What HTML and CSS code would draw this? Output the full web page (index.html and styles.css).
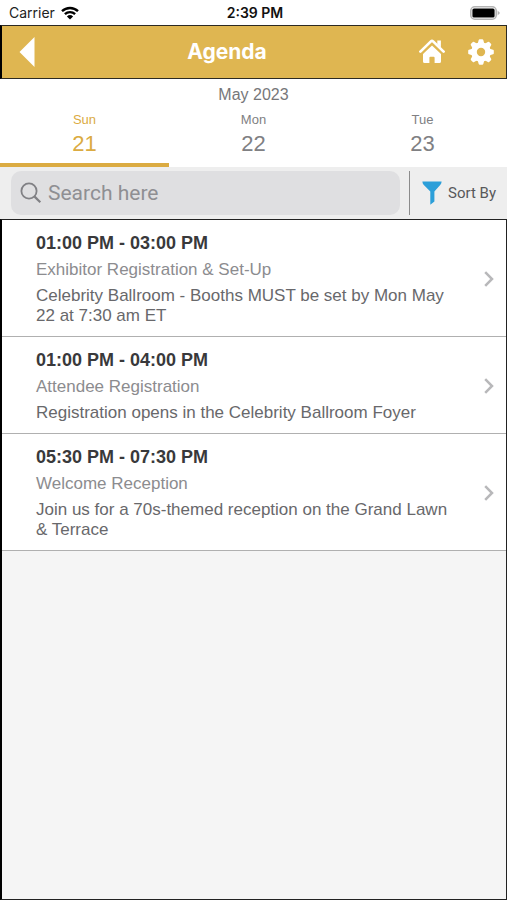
FILE: index.html
```html
<!DOCTYPE html>
<html lang="en">
<head>
<meta charset="utf-8">
<meta name="viewport" content="width=device-width, initial-scale=1">
<title>Agenda</title>
<link rel="stylesheet" href="styles.css">
</head>
<body>
<div class="status">
  <div class="carrier">
    <span>Carrier</span>
    <svg width="20" height="16" viewBox="0 0 20 16" aria-hidden="true">
      <path d="M2 6.2a11.6 11.6 0 0 1 16 0M4.9 9.2a7.4 7.4 0 0 1 10.2 0" fill="none" stroke="#000" stroke-width="2.4"/>
      <path d="M10 14.6 6.9 11.5a4.5 4.5 0 0 1 6.2 0z"/>
    </svg>
  </div>
  <span class="clock">2:39 PM</span>
  <svg class="battery" width="32" height="16" viewBox="0 0 32 16" aria-hidden="true">
    <rect x="1.8" y="1.8" width="25.4" height="12.4" rx="4" fill="#fff" stroke="#b4b4b4" stroke-width="1.6"/>
    <rect x="3.4" y="3.4" width="22.2" height="9.2" rx="1.6"/>
    <path d="M28.6 5.6 31 8l-2.400 2.600z" fill="#b4b4b4"/>
  </svg>
</div>

<header class="bar">
  <button class="icon-button" type="button" aria-label="Back">
    <svg width="16" height="30" viewBox="0 0 16 30"><path d="M15.5 0v30L.5 15z" fill="#fff"/></svg>
  </button>
  <h1 class="title">Agenda</h1>
  <div class="actions">
    <button class="icon-button" type="button" aria-label="Home">
      <svg width="26" height="26" viewBox="0 0 26 26" fill="#fff">
        <path d="M1.4 12.600 11.9 2.400q1.100-1 2.200 0L24.600 12.600" fill="none" stroke="#fff" stroke-width="2.700" stroke-linecap="round" stroke-linejoin="round"/>
        <path d="M18.300 1.400h3.600v7.200l-3.600-3.500z"/>
        <path d="M13 6.400 22 15v7.400q0 1.600-1.600 1.600h-4.800v-5.200q0-1-1-1h-3.200q-1 0-1 1V24H5.600Q4 24 4 22.400V15z"/>
      </svg>
    </button>
    <button class="icon-button" type="button" aria-label="Settings">
      <svg width="26" height="26" viewBox="0 0 26 26">
        <g fill="#fff">
          <path fill-rule="evenodd" d="M13 3.200a9.800 9.800 0 1 0 0 19.600 9.800 9.800 0 0 0 0-19.600zm0 5.600a4.200 4.200 0 1 1 0 8.400 4.200 4.200 0 0 1 0-8.400z"/>
          <path id="tooth" d="M9.600 5 10.700 1q.2-.8 1-.8h2.600q.8 0 1 .8L16.400 5z"/>
          <use href="#tooth" transform="rotate(45 13 13)"/>
          <use href="#tooth" transform="rotate(90 13 13)"/>
          <use href="#tooth" transform="rotate(135 13 13)"/>
          <use href="#tooth" transform="rotate(180 13 13)"/>
          <use href="#tooth" transform="rotate(225 13 13)"/>
          <use href="#tooth" transform="rotate(270 13 13)"/>
          <use href="#tooth" transform="rotate(315 13 13)"/>
        </g>
      </svg>
    </button>
  </div>
</header>

<nav class="dates" aria-label="Dates">
  <div class="month">May 2023</div>
  <div class="days">
    <button class="day day-active" type="button" aria-current="date"><span class="weekday">Sun</span><span class="number">21</span></button>
    <button class="day" type="button"><span class="weekday">Mon</span><span class="number">22</span></button>
    <button class="day" type="button"><span class="weekday">Tue</span><span class="number">23</span></button>
  </div>
</nav>

<div class="tools">
  <label class="search">
    <svg width="22" height="22" viewBox="0 0 22 22" fill="none" stroke="#808084" aria-hidden="true">
      <circle cx="9" cy="9" r="7.600" stroke-width="1.800"/><path d="M14.600 14.600 20.300 20.300" stroke-width="2.200"/>
    </svg>
    <input type="search" placeholder="Search here" aria-label="Search">
  </label>
  <button class="sort" type="button">
    <svg width="20" height="24" viewBox="0 0 20 24" aria-hidden="true"><path d="M.4.500h19.200q0 2-1.200 3.200L12.400 10.600V20.500L8.300 23.800V10.600L1.600 3.700Q.4 2.500.4.500z" fill="#2c9fd9"/></svg>
    <span>Sort By</span>
  </button>
</div>

<main class="content">
  <ul class="list">
    <li><a class="session" href="#">
      <div class="details">
        <h2 class="time">01:00 PM - 03:00 PM</h2>
        <p class="name">Exhibitor Registration &amp; Set-Up</p>
        <p class="text">Celebrity Ballroom - Booths MUST be set by Mon May 22 at 7:30 am ET</p>
      </div>
      <svg class="chevron" width="10" height="16" viewBox="0 0 10 16" aria-hidden="true"><path d="m1.200 1.200 6.800 6.800-6.800 6.800"/></svg>
    </a></li>
    <li><a class="session" href="#">
      <div class="details">
        <h2 class="time">01:00 PM - 04:00 PM</h2>
        <p class="name">Attendee Registration</p>
        <p class="text">Registration opens in the Celebrity Ballroom Foyer</p>
      </div>
      <svg class="chevron" width="10" height="16" viewBox="0 0 10 16" aria-hidden="true"><path d="m1.200 1.200 6.800 6.800-6.800 6.800"/></svg>
    </a></li>
    <li><a class="session" href="#">
      <div class="details">
        <h2 class="time">05:30 PM - 07:30 PM</h2>
        <p class="name">Welcome Reception</p>
        <p class="text">Join us for a 70s-themed reception on the Grand Lawn &amp; Terrace</p>
      </div>
      <svg class="chevron" width="10" height="16" viewBox="0 0 10 16" aria-hidden="true"><path d="m1.200 1.200 6.800 6.800-6.800 6.800"/></svg>
    </a></li>
  </ul>
</main>
</body>
</html>
```
FILE: styles.css
```css
* {
  box-sizing: border-box;
}

body {
  margin: 0;
  min-height: 100vh;
  display: flex;
  flex-direction: column;
  background: #fff;
  font-family: "Liberation Sans", Arial, sans-serif;
  color: #66666a;
}

h1, h2, p, ul {
  margin: 0;
  padding: 0;
}

ul {
  list-style: none;
}

button {
  padding: 0;
  border: 0;
  background: none;
  color: inherit;
  font: inherit;
}

svg {
  display: block;
  flex: none;
}

.status {
  display: grid;
  grid-template-columns: 1fr auto 1fr;
  align-items: center;
  padding: 1px 6px 0 9px;
  line-height: 24px;
  font-family: Inter, sans-serif;
  font-size: 14px;
  color: #222;
}

.carrier {
  display: flex;
  align-items: center;
  gap: 5px;
}

.clock {
  font-weight: 600;
  color: #111;
}

.battery {
  justify-self: end;
}

.bar {
  display: flex;
  align-items: center;
  height: 54px;
  padding: 0 12px 0 17px;
  border: 1px solid #2c2a22;
  border-left: 2px solid #000;
  background: #dfb651;
}

.title {
  flex: 1;
  font-family: Inter, sans-serif;
  font-size: 21px;
  font-weight: 700;
  line-height: 28px;
  text-align: center;
  color: #fff;
}

.actions {
  display: flex;
  gap: 23px;
}

.month {
  padding-top: 5px;
  font-size: 16px;
  line-height: 22px;
  text-align: center;
  color: #77777a;
}

.days {
  display: grid;
  grid-template-columns: repeat(3, 1fr);
}

.day {
  display: flex;
  flex-direction: column;
  align-items: center;
  gap: 2px;
  padding: 6px 0 5px;
  border-bottom: 4px solid transparent;
  color: #808083;
}

.day-active {
  border-bottom-color: #dbab42;
  color: #dbab42;
}

.weekday {
  font-size: 13px;
  line-height: 16px;
}

.number {
  font-size: 22px;
  line-height: 28px;
}

.tools {
  display: flex;
  align-items: center;
  height: 52px;
  padding: 0 11px;
  background: #eee;
}

.search {
  flex: 1;
  display: flex;
  align-items: center;
  gap: 6px;
  min-width: 0;
  height: 44px;
  padding: 0 9px;
  border-radius: 10px;
  background: #dfdfe1;
}

.search input {
  flex: 1;
  min-width: 0;
  padding: 0;
  border: 0;
  outline: 0;
  background: none;
  font-family: Roboto, sans-serif;
  font-size: 21px;
  color: #333;
}

.search input::placeholder {
  color: #8f8f93;
  opacity: 1;
}

.sort {
  display: flex;
  align-items: center;
  gap: 6px;
  height: 44px;
  margin-left: 9px;
  padding-left: 12px;
  border-left: 1px solid #8c8c8c;
  font-family: Roboto, sans-serif;
  font-size: 15px;
  color: #58585a;
}

.content {
  flex: 1;
  border: 1px solid #222;
  border-left: 2px solid #000;
  background: #f5f5f5;
}

.session {
  display: flex;
  align-items: center;
  gap: 24px;
  padding: 12px 12px 10px 34px;
  border-bottom: 1px solid #b0b0b0;
  background: #fff;
  color: #68686b;
  text-decoration: none;
}

.details {
  flex: 1;
  display: grid;
  gap: 6px;
}

.time {
  font-size: 18px;
  line-height: 22px;
  color: #39393b;
}

.name,
.text {
  font-size: 17px;
  line-height: 20px;
}

.name {
  color: #8c8c8f;
}

.chevron {
  fill: none;
  stroke: #b8b8ba;
  stroke-width: 2.5;
}
```
